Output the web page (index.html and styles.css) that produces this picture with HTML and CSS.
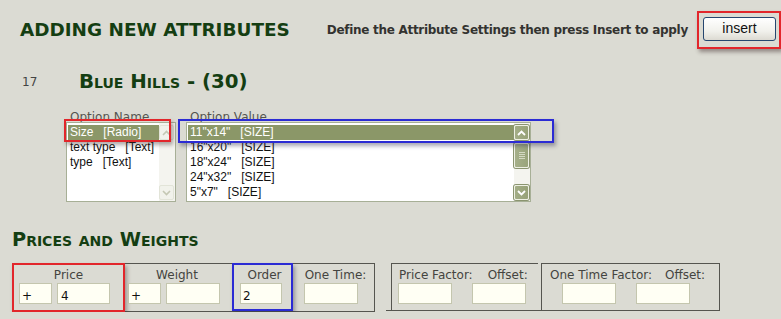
FILE: index.html
```html
<!DOCTYPE html>
<html>
<head>
<meta charset="utf-8">
<link rel="stylesheet" href="styles.css">
</head>
<body>
<div class="page">
  <div class="header">
    <h1 class="title">ADDING NEW ATTRIBUTES</h1>
    <div class="sub">Define the Attribute Settings then press Insert to apply</div>
    <div class="btnbox"><button class="btn">insert</button></div>
  </div>

  <div class="product">
    <span class="num">17</span>
    <span class="pname">Blue Hills - (30)</span>
  </div>

  <div class="lists">
    <div class="col col-name">
      <div class="lbl">Option Name</div>
      <div class="listbox">
        <div class="rows">
          <div class="row sel">Size   [Radio]</div>
          <div class="row">text type   [Text]</div>
          <div class="row">type   [Text]</div>
        </div>
        <div class="sbar dis">
          <div class="sbtn"><svg width="9" height="6" viewBox="0 0 9 6"><path d="M1 5 L4.5 1.5 L8 5" fill="none" stroke="#c4c7b3" stroke-width="1.6"/></svg></div>
          <div class="strack"></div>
          <div class="sbtn"><svg width="9" height="6" viewBox="0 0 9 6"><path d="M1 1 L4.5 4.5 L8 1" fill="none" stroke="#c4c7b3" stroke-width="1.6"/></svg></div>
        </div>
        <div class="mark red-row"></div>
      </div>
    </div>
    <div class="col col-val">
      <div class="lbl">Option Value</div>
      <div class="listbox wide">
        <div class="rows">
          <div class="row sel">11"x14"   [SIZE]</div>
          <div class="row">16"x20"   [SIZE]</div>
          <div class="row">18"x24"   [SIZE]</div>
          <div class="row">24"x32"   [SIZE]</div>
          <div class="row">5"x7"   [SIZE]</div>
        </div>
        <div class="sbar">
          <div class="sbtn on"><svg width="9" height="6" viewBox="0 0 9 6"><path d="M1 5 L4.5 1.5 L8 5" fill="none" stroke="#ffffff" stroke-width="1.8"/></svg></div>
          <div class="strack">
            <div class="thumb"><span></span><span></span><span></span><span></span></div>
          </div>
          <div class="sbtn on"><svg width="9" height="6" viewBox="0 0 9 6"><path d="M1 1 L4.5 4.5 L8 1" fill="none" stroke="#ffffff" stroke-width="1.8"/></svg></div>
        </div>
        <div class="mark blue-row"></div>
      </div>
    </div>
  </div>

  <h2 class="sect">Prices and Weights</h2>

  <div class="groups">
    <div class="grp1">
      <div class="cell c-price">
        <div class="clbl">Price</div>
        <div class="inrow"><input class="inp s" value="+" readonly><input class="inp m" value="4" readonly></div>
        <div class="mark red-cell"></div>
      </div>
      <div class="cell c-weight">
        <div class="clbl">Weight</div>
        <div class="inrow"><input class="inp s" value="+" readonly><input class="inp m" value="" readonly></div>
      </div>
      <div class="cell c-order">
        <div class="clbl">Order</div>
        <div class="inrow"><input class="inp o" value="2" readonly></div>
        <div class="mark blue-cell"></div>
      </div>
      <div class="cell c-once">
        <div class="clbl">One Time:</div>
        <div class="inrow"><input class="inp m" value="" readonly></div>
      </div>
    </div>
    <div class="grp2">
      <div class="box box-a">
        <div class="flbls"><span class="fl1">Price Factor:</span><span class="fl2">Offset:</span></div>
        <div class="finps"><input class="inp m" value="" readonly><input class="inp m" value="" readonly></div>
      </div>
      <div class="box box-b">
        <div class="flbls"><span class="fl1">One Time Factor:</span><span class="fl2">Offset:</span></div>
        <div class="finps"><input class="inp m" value="" readonly><input class="inp m" value="" readonly></div>
      </div>
    </div>
  </div>
</div>
</body>
</html>
```

FILE: styles.css
```css
html, body {
  margin: 0;
  padding: 0;
  background: #dbdbd3;
  font-family: "DejaVu Sans", Verdana, sans-serif;
  overflow: hidden;
}

.page {
  padding-top: 11px;
}

/* header */
.header {
  display: flex;
  align-items: center;
  height: 38px;
}
.title {
  margin: 0 0 0 20px;
  font: bold 18.4px/1 "DejaVu Sans", sans-serif;
  color: #143e12;
  white-space: nowrap;
}
.sub {
  margin-left: 37px;
  font: bold 12px/1 "DejaVu Sans", sans-serif;
  letter-spacing: -0.29px;
  color: #333330;
  white-space: nowrap;
}
.btnbox {
  margin-left: 9px;
  border: 2px solid #e2262b;
  padding: 4px 3px 6px 4px;
  box-shadow: 2px 3px 4px rgba(60, 40, 40, 0.45);
}
.btn {
  display: block;
  width: 73px;
  height: 24px;
  border: 1px solid #26466f;
  border-radius: 3px;
  background: linear-gradient(#ffffff, #f1f1ec 60%, #dcdad2);
  font: 14px "Liberation Sans", Arial, sans-serif;
  color: #111;
  padding: 0 0 2px;
}

/* product line */
.product {
  display: flex;
  align-items: center;
  height: 20px;
  margin-top: 23px;
}
.num {
  width: 79px;
  padding-left: 22px;
  box-sizing: border-box;
  font-size: 12px;
  color: #444;
}
.pname {
  font: bold 19.8px/1 "DejaVu Sans", sans-serif;
  font-variant: small-caps;
  color: #143e12;
}

/* lists */
.lists {
  display: flex;
  gap: 10px;
  margin-top: 18px;
  padding-left: 66px;
}
.col {
  display: flex;
  flex-direction: column;
}
.lbl {
  font-size: 12px;
  line-height: 14px;
  margin-bottom: -2px;
  padding-left: 4px;
  color: #555550;
}
.listbox {
  position: relative;
  display: flex;
  width: 110px;
  height: 80px;
  box-sizing: border-box;
  border: 1px solid #a7af96;
  background: #fff;
}
.listbox.wide {
  width: 345px;
}
.rows {
  flex: 1;
  padding: 2px 0 0 1px;
  overflow: hidden;
}
.row {
  height: 15px;
  padding-left: 2px;
  font: 12px/15px "Liberation Sans", Arial, sans-serif;
  white-space: pre;
  color: #111;
}
.row.sel {
  background: #8b9768;
  color: #fff;
}
.sbar {
  width: 16px;
  display: flex;
  flex-direction: column;
  padding: 2px 1px 1px 0;
  background: #f4f4ef;
  box-sizing: border-box;
}
.sbtn {
  height: 15px;
  box-sizing: border-box;
  display: flex;
  align-items: center;
  justify-content: center;
  border: 1px solid #e2e4d8;
  border-radius: 2px;
  background: #f1f2eb;
}
.sbtn.on {
  border: 1px solid #eef0e4;
  background: linear-gradient(90deg, #a3ad86, #97a278);
  box-shadow: 0 0 0 1px #8b9570;
}
.strack {
  flex: 1;
  position: relative;
}
.thumb {
  position: absolute;
  top: 3px;
  left: 0;
  right: 0;
  height: 25px;
  box-sizing: border-box;
  border: 1px solid #eef0e4;
  border-radius: 2px;
  background: linear-gradient(90deg, #a6b08a, #99a47b);
  box-shadow: 0 0 0 1px #8b9570;
  display: flex;
  flex-direction: column;
  justify-content: center;
  align-items: center;
  gap: 1px;
}
.thumb span {
  display: block;
  width: 6px;
  height: 1px;
  background: #d4d9c3;
}

/* highlight marks */
.mark {
  position: absolute;
  pointer-events: none;
}
.red-row {
  left: -3px;
  top: -4px;
  width: 103px;
  height: 19px;
  border: 2px solid #e2262b;
  box-shadow: 2px 3px 4px rgba(60, 40, 40, 0.4);
}
.blue-row {
  left: -9px;
  top: -4px;
  width: 372px;
  height: 20px;
  border: 2px solid #2b2bd4;
  box-shadow: 2px 3px 4px rgba(40, 40, 70, 0.4);
}

/* section heading */
.sect {
  margin: 28px 0 0 12px;
  height: 20px;
  font: bold 19.3px/20px "DejaVu Sans", sans-serif;
  font-variant: small-caps;
  color: #143e12;
}

/* groups */
.groups {
  display: flex;
  margin-top: 13px;
  padding-left: 12px;
}
.grp1 {
  display: flex;
  border: 1px solid #55554f;
  height: 49px;
  box-sizing: border-box;
}
.cell {
  position: relative;
  padding-top: 3px;
}
.clbl {
  font-size: 12px;
  line-height: 16px;
  text-align: center;
  color: #444440;
}
.inrow {
  display: flex;
  gap: 5px;
}
.c-price { width: 111px; padding-left: 6px; box-sizing: border-box; }
.c-price .clbl { margin-left: -6px; }
.c-weight { width: 104px; padding-left: 4px; box-sizing: border-box; }
.c-weight .clbl { margin-left: -2px; }
.c-order { width: 69px; padding-left: 12px; box-sizing: border-box; }
.c-order .clbl { margin-left: -8px; }
.c-once { width: 77px; padding-left: 7px; box-sizing: border-box; }
.c-once .clbl { margin-left: -7px; }

.inp {
  display: block;
  height: 21px;
  box-sizing: border-box;
  border: 1px solid #c4c6ae;
  background: #fffff4;
  font: 12px "DejaVu Sans", sans-serif;
  color: #111;
  padding: 4px 0 0 2px;
  margin: 0;
  outline: none;
}
.inp.s { width: 33px; }
.inp.m { width: 54px; }
.inp.o { width: 42px; }
.c-price .inp.m { width: 53px; padding-left: 3px; }

.red-cell {
  left: -1px;
  top: -1px;
  right: -1px;
  bottom: -1px;
  border: 2px solid #e2262b;
  box-shadow: 2px 3px 4px rgba(60, 40, 40, 0.4);
}
.blue-cell {
  left: 4px;
  top: -1px;
  right: 4px;
  bottom: 0;
  border: 2px solid #2b2bd4;
  box-shadow: 2px 3px 4px rgba(40, 40, 70, 0.4);
}

.grp2 {
  display: flex;
  gap: 3px;
  margin-left: 11px;
  padding-left: 5px;
  width: 334px;
  height: 48px;
  box-sizing: border-box;
  border-bottom: 1px solid #55554f;
}
.box {
  border-top: 1px solid #55554f;
  border-left: 1px solid #55554f;
  padding-top: 3px;
  box-sizing: border-box;
}
.box-a { width: 147px; padding-left: 7px; }
.box-b { width: 179px; border-right: 1px solid #55554f; padding-left: 8px; }
.flbls {
  display: flex;
  font-size: 12px;
  line-height: 16px;
  color: #444440;
  white-space: nowrap;
}
.box-a .fl2 { margin-left: 15px; }
.box-b .fl2 { margin-left: 13px; }
.finps {
  display: flex;
  gap: 20px;
}
.box-a .finps { margin-left: -1px; }
.box-b .finps { margin-left: 12px; }
```
